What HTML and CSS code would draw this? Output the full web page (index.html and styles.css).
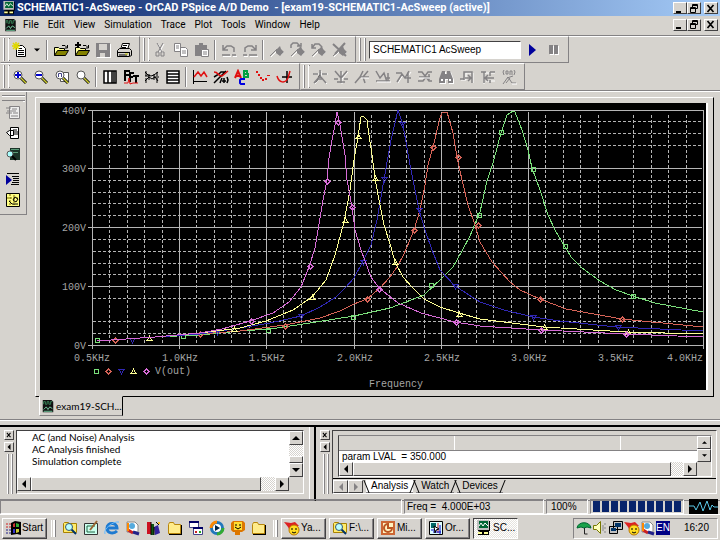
FILE: index.html
```html
<!DOCTYPE html>
<html lang="en">

<head>
  <meta charset="utf-8">
  <title>SCHEMATIC1-AcSweep - OrCAD PSpice A/D Demo</title>
  <link rel="stylesheet" href="styles.css">
</head>

<body>
  <!-- shared icons -->
  <svg class="defs" width="0" height="0">
    <symbol id="app" viewBox="0 0 16 16">
      <path fill="#000" d="M2 1h12v10H2zM4 11h9v4H2v-3z" />
      <path fill="#c0c0c0" d="M1 0h12v10H1z" />
      <path fill="#063" d="M3 1h9v7H3z" />
      <path fill="none" stroke="#fff" d="M3 6l2-3 2 3 2-3 3 3" />
      <path fill="#ff9" d="M2 12h4v2H2zM8 12h4v2H8z" />
    </symbol>
    <symbol id="doc-app" viewBox="0 0 16 16">
      <path fill="#111" d="M2 1h10l2 2v12H2z" />
      <path fill="none" stroke="#3a8a5c" d="M3 6V3h2v3h2V3h2v3h2V3h2" />
      <path fill="none" stroke="#7fe0b0" d="M3 12l3-3 2 3 2-3 3 2M3 14h10" />
    </symbol>
    <symbol id="folder" viewBox="0 0 16 16">
      <path fill="#000" d="M2 5h13v10H2z" />
      <path fill="#ffec8b" stroke="#b8860b" d="M1.500 13.500V4.500l1-2h4l1 2h6v9z" />
    </symbol>
    <symbol id="open" viewBox="0 0 16 16">
      <path fill="#ffff9c" stroke="#000" d="M1.500 13.500v-8h4l1 1h5v3" />
      <path fill="#848200" stroke="#000" d="M1.500 13.500l3-5h11l-3 5z" />
      <path fill="none" stroke="#000" d="M9 3.500h3l2 2M14.500 3v3H12" />
    </symbol>
    <symbol id="lens" viewBox="0 0 16 16">
      <path stroke="#000" stroke-width="3" d="M9 9l5 5" />
      <path stroke="#cc3" stroke-width="1.500" d="M9 9l5 5" />
      <circle cx="6" cy="6" r="4" fill="#fff" stroke="#555" />
    </symbol>
    <symbol id="search" viewBox="0 0 16 16">
      <path fill="#ffec6b" stroke="#a98200" d="M1.500 12.500v-9l1-1h4l1 1h7v9z" />
      <path stroke="#036" stroke-width="2" d="M9 9l5 5" />
      <circle cx="7" cy="7" r="3.500" fill="#bff" stroke="#357" />
    </symbol>
    <symbol id="flag" viewBox="0 0 16 16">
      <path fill="none" stroke="#fff" d="M2 15l7-7M12 13l3-3" />
      <path fill="none" stroke="#848284" d="M1 14l7-7" />
      <path fill="#848284" d="M7 8l4-4 1 3 3 3-4 4-4-3z" />
    </symbol>
    <symbol id="messenger" viewBox="0 0 16 16">
      <path fill="#d22" d="M0 2l7 1 4-1 4 4-6 1-3 4-2-4z" />
      <circle cx="10" cy="10" r="5" fill="#fd2" stroke="#b70" />
      <path stroke="#000" fill="none" d="M8 8v2M12 8v2M8 12l2 1 2-1" />
    </symbol>
    <symbol id="paint" viewBox="0 0 16 16">
      <path fill="#fff" stroke="#888" d="M2 2h8l3 3v7H2z" />
      <circle cx="7" cy="6" r="3" fill="#5ad" />
      <path stroke="#c22" stroke-width="3" d="M3 10l5 3" />
      <path stroke="#228" stroke-width="3" d="M8 12l6 2" />
      <path stroke="#f80" stroke-width="2" d="M3 3v8" />
    </symbol>
    <symbol id="cursor-curve" viewBox="0 0 16 16">
      <path fill="none" stroke="#fff" d="M2 14l5-8 3 4 5-7" />
      <path fill="none" stroke="#848284" stroke-width="1.500" d="M1 13l5-8 3 4 4-7M0 4h6M12 3v11M9 9h6" />
    </symbol>
    <symbol id="min" viewBox="0 0 10 9"><path d="M1 7h5v2H1z" /></symbol>
    <symbol id="restore" viewBox="0 0 10 9">
      <path fill="none" stroke="#000" d="M3.500 3V.5h5v4H7M1.500 8.500v-5h5v5zM1 4.500h6M3 1.500h6" />
    </symbol>
    <symbol id="close" viewBox="0 0 10 9">
      <path fill="none" stroke="#000" stroke-width="1.700" d="M1.500 1l6 7M7.500 1l-6 7" />
    </symbol>
    <symbol id="up" viewBox="0 0 8 8"><path d="M4 2l4 4H0z" /></symbol>
    <symbol id="down" viewBox="0 0 8 8"><path d="M0 2h8L4 6z" /></symbol>
    <symbol id="left" viewBox="0 0 8 8"><path d="M6 0v8L2 4z" /></symbol>
    <symbol id="right" viewBox="0 0 8 8"><path d="M2 0v8l4-4z" /></symbol>
    <!-- trace markers -->
    <path id="square" d="M1.500 1.500h4v4h-4z" />
    <path id="diamond" d="M3.500 1l2.500 2.500-2.500 2.500-2.500-2.500z" />
    <path id="tri-up" d="M3.500 1L6 5.500H1z" />
    <path id="tri-down" d="M3.500 6L6 1.500H1z" />
  </svg>

  <header class="titlebar">
    <svg class="icon"><use href="#app" /></svg>
    <h1>SCHEMATIC1-AcSweep - OrCAD PSpice A/D Demo &nbsp;- [exam19-SCHEMATIC1-AcSweep (active)]</h1>
    <div class="window-buttons">
      <button aria-label="Minimize"><svg><use href="#min" /></svg></button>
      <button aria-label="Restore"><svg><use href="#restore" /></svg></button>
      <button class="close" aria-label="Close"><svg><use href="#close" /></svg></button>
    </div>
  </header>

  <nav class="menubar">
    <svg class="icon"><use href="#doc-app" /></svg>
    <button>File</button>
    <button>Edit</button>
    <button>View</button>
    <button>Simulation</button>
    <button>Trace</button>
    <button>Plot</button>
    <button>Tools</button>
    <button>Window</button>
    <button>Help</button>
    <div class="window-buttons">
      <button aria-label="Minimize"><svg><use href="#min" /></svg></button>
      <button aria-label="Restore"><svg><use href="#restore" /></svg></button>
      <button class="close" aria-label="Close"><svg><use href="#close" /></svg></button>
    </div>
  </nav>

  <div class="toolbar">
    <div class="group">
      <i class="grip"></i>
      <button class="tool" aria-label="New"><svg class="icon" viewBox="0 0 16 16">
        <path fill="#fff" stroke="#000" d="M4.500 14.500v-11h6l3 3v8z" />
        <path stroke="#000" d="M7 6.500h3M6 8.500h6M6 10.500h6M6 12.500h6" />
        <path stroke="#e0d800" stroke-width="1.500" d="M4 0v8M0 4h8M1 1l6 6M7 1L1 7" />
      </svg></button>
      <button class="tool narrow" aria-label="New menu"><svg class="arrow"><use href="#down" /></svg></button>
      <i class="sep"></i>
      <button class="tool" aria-label="Open"><svg class="icon"><use href="#open" /></svg></button>
      <button class="tool" aria-label="Append"><svg class="icon" viewBox="0 0 16 16">
        <use href="#open" /><path stroke="#000" stroke-width="2" d="M4 0v6M1 3h6" />
      </svg></button>
      <button class="tool" aria-label="Save"><svg class="icon" viewBox="0 0 16 16">
        <path fill="#fff" d="M2 2h14v14H2z" />
        <path fill="#848284" d="M1 1h14v14H1z" /><path fill="#d6d3ce" d="M4 2h8v6H4zM5 11h5v4H5z" />
      </svg></button>
      <button class="tool" aria-label="Print"><svg class="icon" viewBox="0 0 16 16">
        <path fill="#fff" stroke="#000" d="M4.500 7.500l2-6h7l-2 6z" /><path stroke="#000" d="M7 3.500h4M6 5.500h4" />
        <path fill="#d6d3ce" stroke="#000" d="M1.500 8.500l2-2h10l2 2v5l-2 1h-12z" />
        <path stroke="#000" d="M1 10.500h13M3 13h8M13.500 10v4" /><path stroke="#cc0" d="M9 12h3" />
      </svg></button>
    </div>
    <div class="group">
      <i class="grip"></i>
      <button class="tool" aria-label="Cut"><svg class="icon" viewBox="0 0 16 16">
        <path fill="none" stroke="#fff" d="M6 2l5 9M12 2l-5 9" />
        <path fill="none" stroke="#848284" d="M5 1l5 9M11 1l-5 9M4 10h3v4H4zM9 10h3v4H9z" />
      </svg></button>
      <button class="tool" aria-label="Copy"><svg class="icon" viewBox="0 0 16 16">
        <path fill="#fff" stroke="#848284" d="M1.500 1.500h6v8h-6zM7.500 5.500h5l2 2v7h-7z" />
        <path stroke="#848284" d="M3 4h3M3 6h3M9 9h4M9 11h4" />
      </svg></button>
      <button class="tool" aria-label="Paste"><svg class="icon" viewBox="0 0 16 16">
        <path fill="#848284" d="M1 3h4V1h4v2h4v11H1z" /><path fill="#fff" stroke="#848284" d="M7.500 7.500h7v7h-7z" />
        <path stroke="#848284" d="M9 10h4M9 12h4" />
      </svg></button>
      <i class="sep"></i>
      <button class="tool" aria-label="Undo"><svg class="icon" viewBox="0 0 16 16">
        <path fill="none" stroke="#848284" stroke-width="1.500" d="M2 3v5h5M2 8l4-4h4l3 2v4M1 13h8M11 13h4" /><path stroke="#fff" d="M2 14.500h8M12 14.500h4" />
      </svg></button>
      <button class="tool" aria-label="Redo"><svg class="icon" viewBox="0 0 16 16">
        <path fill="none" stroke="#848284" stroke-width="1.500" d="M14 3v5H9M14 8l-4-4H6L3 6v4M7 13h8M1 13h4" /><path stroke="#fff" d="M8 14.500h8M2 14.500h4" />
      </svg></button>
      <i class="sep"></i>
      <button class="tool" aria-label="Toggle bookmark"><svg class="icon"><use href="#flag" /></svg></button>
      <button class="tool" aria-label="Next bookmark"><svg class="icon" viewBox="0 0 16 16">
        <use href="#flag" /><path fill="none" stroke="#848284" stroke-width="1.500" d="M1 6V3l2-2h4l3 3M7 4h4V1" />
      </svg></button>
      <button class="tool" aria-label="Previous bookmark"><svg class="icon" viewBox="0 0 16 16">
        <use href="#flag" /><path fill="none" stroke="#848284" stroke-width="1.500" d="M1 2v4h4M1 6l3-4h4l3 3" />
      </svg></button>
      <button class="tool" aria-label="Clear bookmarks"><svg class="icon" viewBox="0 0 16 16">
        <use href="#flag" /><path stroke="#848284" stroke-width="2" d="M1 2l13 12M13 1L3 12" />
      </svg></button>
    </div>
    <div class="group">
      <i class="grip"></i>
      <input class="profile" type="text" aria-label="Simulation profile" value="SCHEMATIC1 AcSweep">
      <button class="tool" aria-label="Run"><svg class="icon" viewBox="0 0 16 16"><path fill="#00009c" d="M5 2l7 6-7 6z" /></svg></button>
      <button class="tool" aria-label="Pause"><svg class="icon" viewBox="0 0 16 16">
        <path fill="#fff" d="M5 4h4v9H5zM10 4h4v9h-4z" /><path fill="#848284" d="M4 3h4v9H4zM9 3h4v9H9z" />
      </svg></button>
    </div>
  </div>

  <div class="toolbar">
    <div class="group">
      <i class="grip"></i>
      <button class="tool" aria-label="Zoom in"><svg class="icon" viewBox="0 0 16 16">
        <use href="#lens" /><path stroke="#00c" stroke-width="2" d="M6 3v6M3 6h6" />
      </svg></button>
      <button class="tool" aria-label="Zoom out"><svg class="icon" viewBox="0 0 16 16">
        <use href="#lens" /><path stroke="#00c" stroke-width="2" d="M3 6h6" />
      </svg></button>
      <button class="tool" aria-label="Zoom area"><svg class="icon" viewBox="0 0 16 16">
        <path fill="#fff" stroke="#555" d="M6.500 3.500h8v9h-8z" /><use href="#lens" /><path fill="none" stroke="#448" d="M4.500 8V4.500h3V8" />
      </svg></button>
      <button class="tool" aria-label="Zoom fit"><svg class="icon"><use href="#lens" /></svg></button>
      <i class="sep"></i>
      <button class="tool" aria-label="Log X axis"><svg class="icon" viewBox="0 0 16 16">
        <path fill="#fff" stroke="#000" stroke-width="1.500" d="M2 2h12v12H2zM6 2v12M10 2v12M12 2v12" />
      </svg></button>
      <button class="tool" aria-label="Fourier"><svg class="icon" viewBox="0 0 16 16">
        <path fill="none" stroke="#000" stroke-width="2" d="M2 12V2h5M2 6h4M7 13V4h4M7 8h3M10 7h6M13 7v7" />
        <path fill="none" stroke="#e01010" d="M1 14h4l1-5 1 6 3-1h5" />
      </svg></button>
      <button class="tool" aria-label="Performance analysis"><svg class="icon" viewBox="0 0 16 16">
        <path fill="none" stroke="#000" d="M1 3l3 3 3 1 3-1 4-3M1 12l4-4 3 2 3-2 3 4M2 2v5M2 9v5M13 3v4M13 9v5M5 5v6M10 5v6M1 7h4M10 8h5" />
      </svg></button>
      <button class="tool" aria-label="Log Y axis"><svg class="icon" viewBox="0 0 16 16">
        <path fill="#fff" stroke="#000" stroke-width="1.500" d="M2 2h12v12H2zM2 5h12M2 8h12M2 11h12" />
      </svg></button>
      <i class="sep"></i>
      <button class="tool" aria-label="Add trace"><svg class="icon" viewBox="0 0 16 16">
        <path fill="none" stroke="#000" d="M1.500 1v14M1 12.500h14" /><path fill="none" stroke="#e01010" stroke-width="1.500" d="M2 8l4-5 3 4 3-4 3 5" />
      </svg></button>
      <button class="tool" aria-label="Eval goal function"><svg class="icon" viewBox="0 0 16 16">
        <path fill="none" stroke="#000" stroke-width="1.500" d="M1 8l5-3 2-2h5M1 14L13 2M7 14l2-5M11 9v5M14 8l1 3-1 3M9 12h4" />
        <path fill="none" stroke="#e01010" stroke-width="1.500" d="M1 3c5 0 3 4 8 4l6-5" />
      </svg></button>
      <button class="tool" aria-label="Text label"><svg class="icon" viewBox="0 0 16 16">
        <path fill="none" stroke="#e01010" stroke-width="2" d="M1 9l3-7 3 7M2 7h4" />
        <path fill="none" stroke="#00a040" stroke-width="2" d="M10 1v7h4V5h-4 3V2h-3" />
        <path fill="none" stroke="#0000e0" stroke-width="2" d="M11 10H7L6 11v3l1 1h4" />
      </svg></button>
      <button class="tool" aria-label="Mark data points"><svg class="icon" viewBox="0 0 16 16">
        <path fill="#e01010" d="M1 2h2v2H1zM3 5h2v2H3zM5 8h2v2H5zM7 10h2v2H7zM10 9h2v2h-2zM12 6h3v1h-3z" />
      </svg></button>
      <button class="tool" aria-label="Toggle cursor"><svg class="icon" viewBox="0 0 16 16">
        <path fill="none" stroke="#000" stroke-width="1.500" d="M11 2v12M6 8h10" /><path fill="none" stroke="#e01010" stroke-width="1.500" d="M1 7c2 7 8 8 11 2l2-7" />
      </svg></button>
    </div>
    <div class="group">
      <i class="grip"></i>
      <button class="tool" aria-label="Cursor peak"><svg class="icon" viewBox="0 0 16 16">
        <path stroke="#fff" d="M2 5h14M9 2v6L3 15M9 8l6 7" /><path fill="none" stroke="#848284" stroke-width="1.500" d="M8 1v6l-6 7M8 7l6 7M1 5h5M10 5h5M5 10h6" />
      </svg></button>
      <button class="tool" aria-label="Cursor trough"><svg class="icon" viewBox="0 0 16 16">
        <path fill="none" stroke="#fff" d="M3 3l6 7 6-7M9 3v12" /><path fill="none" stroke="#848284" stroke-width="1.500" d="M2 2l6 7 6-7M8 2v12M1 10h4M11 10h4M4 13h8" />
      </svg></button>
      <button class="tool" aria-label="Cursor slope"><svg class="icon" viewBox="0 0 16 16">
        <path fill="none" stroke="#848284" stroke-width="1.500" d="M1 14l5-6 3-6M6 8h9M9 8l5-6M9 8l2 6" /><path stroke="#fff" d="M7 9h8" />
      </svg></button>
      <button class="tool" aria-label="Cursor min"><svg class="icon" viewBox="0 0 16 16">
        <path fill="none" stroke="#848284" stroke-width="1.500" d="M1 2l4 7 4-5 3 9M1 12h14M13 4v8M10 9h5" /><path stroke="#fff" d="M2 13h14" />
      </svg></button>
      <button class="tool" aria-label="Cursor max"><svg class="icon"><use href="#cursor-curve" /></svg></button>
      <button class="tool" aria-label="Cursor point"><svg class="icon" viewBox="0 0 16 16">
        <path fill="none" stroke="#848284" stroke-width="1.500" d="M1 3h4l3 4 3-4h4M1 12h5l3-4 3 4h3M2 8h11M12 5v6" /><path stroke="#fff" d="M2 9h11" />
      </svg></button>
      <button class="tool" aria-label="Cursor search"><svg class="icon" viewBox="0 0 16 16">
        <path fill="#fff" d="M5 3h3v3h2V3h3l3 8v4h-5v-4H8v4H2v-4z" /><path fill="#848284" d="M4 2h3v3h2V2h3l3 8v4h-5v-4H7v4H1v-4z" /><path fill="#fff" d="M3 10h2v2H3zM11 10h2v2h-2z" />
      </svg></button>
      <button class="tool" aria-label="Next transition"><svg class="icon" viewBox="0 0 16 16">
        <path fill="none" stroke="#fff" d="M2 11h5V4h7v10" /><path fill="none" stroke="#848284" stroke-width="1.500" d="M1 10h4M5 11V3h8v11M6 9h7M9 6l3 3-3 3" />
      </svg></button>
      <button class="tool" aria-label="Previous transition"><svg class="icon" viewBox="0 0 16 16">
        <path fill="none" stroke="#fff" d="M4 15V4h11M6 12h9" /><path fill="none" stroke="#848284" stroke-width="1.500" d="M4 14V3h2M1 3h3M10 3h5M4 9h10M8 6L5 9l3 3M10 3v4M10 11v3" />
      </svg></button>
      <button class="tool" aria-label="Mark label"><svg class="icon" viewBox="0 0 16 16">
        <path fill="none" stroke="#848284" d="M3 1L2 3l1 3M5 2h2v3H5zM9 6V2h2v4M13 1l1 2-1 3M2 15l5-7 4 6h4M6 9l6-2M5 14l4-5" /><path stroke="#fff" d="M11 15h5" />
      </svg></button>
    </div>
  </div>

  <main class="workspace">
    <aside class="side">
      <i class="side-grip"></i>
      <button class="tool" aria-label="Simulation results"><svg class="icon" viewBox="0 0 16 16">
        <path fill="#eee" stroke="#848284" d="M4.500 14.500v-12h10v12z" /><path stroke="#848284" d="M1 4h5M7 5h5M2 7h9M1 9h6M8 9h5M6 12h7" />
      </svg></button>
      <button class="tool" aria-label="Output file"><svg class="icon" viewBox="0 0 16 16">
        <path fill="#fff" stroke="#000" d="M5.500 13.500v-11h8v11zM1.500 7.500l3-2h4v5h-4z" /><path stroke="#000" d="M8 5h4M9 7h4M9 9h4" />
      </svg></button>
      <button class="tool" aria-label="Circuit file"><svg class="icon" viewBox="0 0 16 16">
        <path fill="#1b3328" d="M5 2h10v12H5z" /><path stroke="#5a9a78" d="M6 3.500h8M7 6.500h6" /><circle cx="5" cy="8" r="3" fill="#aff" stroke="#555" /><path stroke="#000" stroke-width="2" d="M7 10l4 4" />
      </svg></button>
      <button class="tool late" aria-label="Output window"><svg class="icon" viewBox="0 0 16 16">
        <path stroke="#000" d="M2 2.500h12M7 5.500h7M8 7.500h6M8 9.500h6M7 11.500h7M6 13.500h8" /><path fill="#00009c" d="M1 4l6 5-6 5z" />
      </svg></button>
      <button class="tool" aria-label="Status window"><svg class="icon" viewBox="0 0 16 16">
        <path fill="#ffff84" stroke="#000" d="M1.500 1.500h13v13h-13z" /><path fill="none" stroke="#760" stroke-dasharray="2 1" d="M2 6h12M5 2v12M9 3v10" /><path fill="none" stroke="#000" d="M4 9l3 3h6M8 8l2-3 3 2-2 3z" />
      </svg></button>
    </aside>

    <section class="document">
      <div class="frame">
        <svg class="plot" viewBox="40 103 666 287" role="img" aria-label="V(out) against frequency">
          <g class="grid">
            <path class="minor" d="M93 121.500H702M93 133.500H702M93 145.500H702M93 180.500H702M93 192.500H702M93 203.500H702M93 215.500H702M93 239.500H702M93 251.500H702M93 263.500H702M93 274.500H702M93 298.500H702M93 321.500H702M93 333.500H702" />
            <path class="minor" d="M109.500 115V345M127.500 115V345M144.500 115V345M162.500 115V345M196.500 115V345M214.500 115V345M231.500 115V345M249.500 115V345M283.500 115V345M301.500 115V345M371.500 115V345M389.500 115V345M406.500 115V345M424.500 115V345M458.500 115V345M476.500 115V345M493.500 115V345M511.500 115V345M545.500 115V345M563.500 115V345M580.500 115V345M598.500 115V345M633.500 115V345M651.500 115V345M668.500 115V345M686.500 115V345" />
            <path d="M88 110.500H703M88 168.500H702M88 227.500H702M88 286.500H702M88 345.500H703" />
            <path d="M92.500 110V349M179.500 112V349M266.500 112V349M354.500 112V349M441.500 112V349M528.500 112V349M703.500 110V349" />
          </g>
          <g class="axis">
            <text x="62" y="114">400V</text>
            <text x="62" y="172">300V</text>
            <text x="62" y="231">200V</text>
            <text x="62" y="290">100V</text>
            <text x="74" y="349">0V</text>
            <text x="74" y="361">0.5KHz</text>
            <text x="162" y="361">1.0KHz</text>
            <text x="249" y="361">1.5KHz</text>
            <text x="337" y="361">2.0KHz</text>
            <text x="424" y="361">2.5KHz</text>
            <text x="511" y="361">3.0KHz</text>
            <text x="598" y="361">3.5KHz</text>
            <text x="667" y="361">4.0KHz</text>
            <text x="155" y="374">V(out)</text>
            <text x="369" y="387">Frequency</text>
          </g>
          <g class="green">
            <polyline points="97,341 155,337 200,335 240,331 270,329 297,325 354,316 390,308 406,302 424,295 442,278 453,267 462,251 470,236 480,212 487,181 493,163 501,133 507,115 513,111 515,112 522,130 528,150 532,168 540,190 548,215 556,232 564,245 571,257 582,268 600,281 616,290 633,296 655,303 703,312" />
            <use href="#square" x="94" y="337" /><use href="#square" x="180" y="333" /><use href="#square" x="265" y="327" /><use href="#square" x="350" y="314" /><use href="#square" x="428" y="282" /><use href="#square" x="476" y="212" /><use href="#square" x="498" y="129" /><use href="#square" x="530" y="166" /><use href="#square" x="562" y="243" /><use href="#square" x="630" y="293" />
            <use href="#square" x="93" y="368" />
          </g>
          <g class="red">
            <polyline points="97,341 155,337 200,334 240,331 285,325 320,318 340,311 354,304 367,299 380,288 390,277 397,267 403,256 407,247 414,230 420,210 425,185 428,165 433,147 440,118 442,113 447,112 453,133 457,157 462,180 468,205 475,225 480,242 492,262 510,282 520,290 540,299 566,309 622,319 703,327" />
            <use href="#diamond" x="112" y="337" /><use href="#diamond" x="197" y="331" /><use href="#diamond" x="282" y="323" /><use href="#diamond" x="364" y="296" /><use href="#diamond" x="411" y="227" /><use href="#diamond" x="430" y="144" /><use href="#diamond" x="455" y="154" /><use href="#diamond" x="475" y="222" /><use href="#diamond" x="537" y="296" /><use href="#diamond" x="619" y="316" />
            <use href="#diamond" x="105" y="368" />
          </g>
          <g class="blue">
            <polyline points="97,341 155,337 200,334 240,328 270,323 301,316 320,307 336,297 345,288 354,278 363,261 371,245 377,220 383,185 391,140 398,110 403,125 410,165 415,190 419,210 425,230 432,250 440,270 455,286 480,302 504,310 533,317 560,321 616,327 703,331" />
            <use href="#tri-down" x="129" y="337" /><use href="#tri-down" x="214" y="329" /><use href="#tri-down" x="298" y="313" /><use href="#tri-down" x="360" y="259" /><use href="#tri-down" x="381" y="176" /><use href="#tri-down" x="399" y="121" /><use href="#tri-down" x="416" y="207" /><use href="#tri-down" x="452" y="283" /><use href="#tri-down" x="530" y="314" /><use href="#tri-down" x="615" y="324" />
            <use href="#tri-down" x="118" y="368" />
          </g>
          <g class="yellow">
            <polyline points="97,341 155,337 200,333 240,328 266,321 293,310 312,297 326,280 335,255 344,222 350,190 354,160 358,137 361,117 363,116 367,120 369,135 372,155 375,178 379,200 384,225 391,247 395,262 403,277 413,288 424,299 440,307 459,313 480,319 544,327 626,332 703,334" />
            <use href="#tri-up" x="146" y="335" /><use href="#tri-up" x="231" y="326" /><use href="#tri-up" x="309" y="294" /><use href="#tri-up" x="342" y="217" /><use href="#tri-up" x="355" y="133" /><use href="#tri-up" x="372" y="175" /><use href="#tri-up" x="392" y="259" /><use href="#tri-up" x="456" y="311" /><use href="#tri-up" x="541" y="324" /><use href="#tri-up" x="625" y="329" />
            <use href="#tri-up" x="130" y="368" />
          </g>
          <g class="magenta">
            <polyline points="97,341 155,337 200,333 222,329 250,321 273,313 289,302 301,287 309,267 315,248 319,224 323,200 327,180 329,158 332,140 335,125 337,112 340,125 345,155 347,180 352,207 355,230 361,250 371,277 379,288 398,303 421,313 455,322 480,326 541,330 626,334 703,337" />
            <use href="#diamond" x="248" y="318" /><use href="#diamond" x="307" y="263" /><use href="#diamond" x="324" y="178" /><use href="#diamond" x="335" y="119" /><use href="#diamond" x="349" y="204" /><use href="#diamond" x="376" y="286" /><use href="#diamond" x="453" y="319" /><use href="#diamond" x="538" y="327" /><use href="#diamond" x="623" y="331" />
            <use href="#diamond" x="143" y="368" />
          </g>
        </svg>
      </div>
      <button class="doc-tab"><svg class="icon"><use href="#doc-app" /></svg>exam19-SCH...</button>
    </section>
  </main>

  <section class="docks">
    <div class="dock output">
      <div class="handle">
        <button aria-label="Close output"><svg><use href="#close" /></svg></button>
        <button aria-label="Collapse output"><svg><use href="#left" /></svg></button>
        <i></i>
      </div>
      <div class="log">
        <div class="log-row">
          <div class="lines">
            <p>AC (and Noise) Analysis</p>
            <p>AC Analysis finished</p>
            <p>Simulation complete</p>
          </div>
          <div class="vscroll">
            <button aria-label="Scroll up"><svg><use href="#up" /></svg></button>
            <span class="track"></span>
            <span class="thumb"></span>
            <button aria-label="Scroll down"><svg><use href="#down" /></svg></button>
          </div>
        </div>
        <div class="hscroll">
          <button aria-label="Scroll left"><svg><use href="#left" /></svg></button>
          <span class="thumb"></span>
          <span class="track"></span>
          <button aria-label="Scroll right"><svg><use href="#right" /></svg></button>
        </div>
      </div>
    </div>

    <div class="dock watch">
      <div class="handle">
        <button aria-label="Close status"><svg><use href="#close" /></svg></button>
        <button aria-label="Collapse status"><svg><use href="#left" /></svg></button>
        <i></i>
      </div>
      <div class="status-box">
        <div class="status-inner">
          <div class="log-row">
            <div class="values">
              <div class="heads"><span></span><span></span><span></span></div>
              <p>param LVAL &nbsp;= 350.000</p>
            </div>
            <div class="vscroll">
              <button aria-label="Scroll up"><svg><use href="#up" /></svg></button>
              <button aria-label="Scroll down"><svg><use href="#down" /></svg></button>
            </div>
          </div>
          <div class="hscroll">
            <button aria-label="Scroll left"><svg><use href="#left" /></svg></button>
            <span class="thumb"></span>
            <span class="track"></span>
            <button aria-label="Scroll right"><svg><use href="#right" /></svg></button>
          </div>
        </div>
        <div class="tabs">
          <button class="nav" aria-label="Previous tab"><svg><use href="#left" /></svg></button>
          <button class="nav" aria-label="Next tab"><svg><use href="#right" /></svg></button>
          <button class="tab active">Analysis</button>
          <button class="tab">Watch</button>
          <button class="tab">Devices</button>
        </div>
      </div>
    </div>
  </section>

  <footer class="statusbar">
    <span class="pane message"></span>
    <span class="pane freq">Freq = &nbsp;4.000E+03</span>
    <span class="pane percent">100%</span>
    <span class="pane blocks"><i></i><i></i><i></i><i></i><i></i><i></i><i></i><i></i><i></i><i></i></span>
    <svg class="scope" viewBox="0 0 29 15"><path fill="#000" d="M0 0h29v15H0z" /><path fill="none" stroke="#5bc8e8" d="M0 7h5l2 4 4-8 3 9 4-10 3 9 2-5 2 2h4" /></svg>
  </footer>

  <div class="taskbar">
    <button class="start"><svg class="icon" viewBox="0 0 16 16">
      <path stroke="#c22" stroke-dasharray="2 1" d="M0 4h6M0 7h6" /><path stroke="#228" stroke-dasharray="2 1" d="M0 10h6M0 13h6" />
      <path fill="#000" d="M5 3l4-2 6 1v13l-4-1-6 1z" /><path fill="#c33" d="M7 4l2-1v4H7z" /><path fill="#3a3" d="M10 3l3 1v3h-3z" /><path fill="#33c" d="M7 9h2v4H7z" /><path fill="#cc3" d="M10 9h3v3l-3 1z" />
    </svg>Start</button>
    <i class="bar-grip"></i>
    <div class="launch">
      <button class="tool" aria-label="Search"><svg class="icon"><use href="#search" /></svg></button>
      <button class="tool" aria-label="Notes"><svg class="icon" viewBox="0 0 16 16">
        <path fill="#cfe" stroke="#333" d="M1.500 3.500h13v11h-13z" /><path stroke="#264" d="M4 6h8M4 12h8M4 6v6" /><path stroke="#963" stroke-width="2" d="M14 1L7 10" />
      </svg></button>
      <button class="tool" aria-label="Browser"><svg class="icon" viewBox="0 0 16 16">
        <path fill="none" stroke="#1e7ad0" stroke-width="3" d="M3 8h10c0-6-10-6-10 0s7 6 10 3" /><path fill="none" stroke="#6bf" d="M1 14C-1 9 9 1 15 2" />
      </svg></button>
      <button class="tool" aria-label="Paint"><svg class="icon"><use href="#paint" /></svg></button>
      <button class="tool" aria-label="Books"><svg class="icon" viewBox="0 0 16 16">
        <path fill="#c12" d="M1 2h4v12H1z" /><path fill="#151" d="M5 4h3v11H5z" /><path fill="#329" d="M8 7l4-2 2 8-5 2z" /><path fill="none" stroke="#000" d="M5 2v13M8 7v8M10 2l3 3" /><path fill="#fb2" d="M12 2h2v2h-2z" />
      </svg></button>
      <button class="tool" aria-label="Folder"><svg class="icon"><use href="#folder" /></svg></button>
      <button class="tool" aria-label="Windows"><svg class="icon" viewBox="0 0 16 16">
        <path fill="#fff" stroke="#448" d="M1.500 1.500h9v6h-9zM5.500 7.500h9v7h-9z" /><path stroke="#006" stroke-width="2" d="M1 2h10M5 8h10" /><path fill="#c22" d="M7 11h2v2H7z" /><path fill="#2a2" d="M11 11h2v2h-2z" />
      </svg></button>
      <button class="tool" aria-label="Media player"><svg class="icon" viewBox="0 0 16 16">
        <circle cx="8" cy="8" r="5.500" fill="#fff" stroke="#27b" stroke-width="3" /><path fill="none" stroke="#f80" stroke-width="3" d="M2 8a6 6 0 0 1 6-6" /><path fill="none" stroke="#3a3" stroke-width="3" d="M14 8a6 6 0 0 1-6 6" /><path fill="#024" d="M6 5l5 3-5 3z" />
      </svg></button>
      <button class="tool" aria-label="Chat"><svg class="icon" viewBox="0 0 16 16">
        <path fill="#d70" d="M3 1h10l2 2v7l-3 2h-2v3H5v-3H3l-2-2V3z" /><path fill="#fd3" d="M4 2h8v8H4z" /><path fill="none" stroke="#000" d="M6 4v2M10 4v2M5 7l3 2 3-2" />
      </svg></button>
      <button class="tool" aria-label="Folder"><svg class="icon"><use href="#folder" /></svg></button>
    </div>
    <i class="bar-grip"></i>
    <div class="tasks">
      <button><svg class="icon"><use href="#messenger" /></svg>Ya...</button>
      <button><svg class="icon"><use href="#search" /></svg>F:\...</button>
      <button><svg class="icon" viewBox="0 0 16 16">
        <path fill="#c63" d="M1 1h14v14H1z" /><path fill="#fff3c0" d="M3 3h10v10H3z" /><path fill="none" stroke="#b52" stroke-width="2" d="M8 4a4 4 0 1 0 4 4H8z" />
      </svg>Mi...</button>
      <button><svg class="icon" viewBox="0 0 16 16">
        <path fill="#dff" stroke="#000" d="M1.500 1.500h13v13h-13z" /><path fill="#066" d="M3 3h5v5H3z" /><path stroke="#c22" d="M10 3v10" /><path stroke="#00c" d="M12 5v9M3 10h6M5 12h8" /><path fill="#fff" stroke="#000" d="M6 6l5 3-3 1-1 3z" />
      </svg>Or...</button>
      <button class="pressed"><svg class="icon"><use href="#app" /></svg>SC...</button>
    </div>
    <div class="tray">
      <svg class="icon" viewBox="0 0 16 16"><path fill="#1aa24a" stroke="#063" d="M1 8c1-7 13-7 14 0l-4-1-3 1-3-1z" /><path fill="none" stroke="#222" d="M8.500 8v6h3" /></svg>
      <svg class="icon" viewBox="0 0 16 16"><path fill="#ffb" stroke="#770" d="M1.500 5.500h3l4-4v12l-4-4h-3z" /><path fill="none" stroke="#888" d="M11 5v6M13 3v2M13 7v2M13 11v2" /></svg>
      <svg class="icon" viewBox="0 0 16 16"><path fill="#c0c0c0" stroke="#000" d="M5.500 1.500h9v8h-9zM1.500 6.500h8v7h-8z" /><path fill="#036" d="M7 3h6v4H7zM3 8h5v3H3z" /></svg>
      <svg class="icon"><use href="#messenger" /></svg>
      <svg class="icon"><use href="#paint" /></svg>
      <span class="lang">EN</span>
      <time>16:20</time>
    </div>
  </div>
</body>

</html>
```
FILE: styles.css
```css
* {
  box-sizing: border-box;
}

body {
  margin: 0;
  min-height: 100vh;
  display: flex;
  flex-direction: column;
  background: #d6d3ce;
  color: #000;
  font: 10px/12px "Liberation Sans", Arial, sans-serif;
  overflow: hidden;
}

button {
  display: flex;
  align-items: center;
  justify-content: center;
  margin: 0;
  padding: 0;
  border: 0;
  background: #d6d3ce;
  color: inherit;
  font: inherit;
}

p {
  margin: 0;
}

svg {
  flex: none;
}

.defs {
  position: absolute;
}

.icon {
  width: 16px;
  height: 16px;
}

/* title and menu */

.titlebar {
  display: flex;
  align-items: center;
  height: 16px;
  padding-right: 2px;
  background: linear-gradient(to right, #08246b, #a5cbf7);
  color: #fff;
}

.titlebar h1 {
  margin: 0;
  flex: 1;
  font: bold 11px/14px Roboto, sans-serif;
  white-space: nowrap;
}

.titlebar .icon,
.menubar .icon {
  width: 15px;
  height: 14px;
  margin: 0 0 0 2px;
}

.menubar {
  display: flex;
  align-items: center;
  height: 20px;
  padding: 0 2px 2px 1px;
  border-bottom: 1px solid #848284;
  box-shadow: 0 1px #fff;
  font-family: Roboto, sans-serif;
}

.menubar > button {
  padding: 0 4px 0 5px;
}

.window-buttons {
  display: flex;
  margin-left: auto;
}

.window-buttons button {
  width: 14px;
  height: 12px;
  border: 1px solid;
  border-color: #fff #424142 #424142 #fff;
}

.window-buttons .close {
  margin-left: 3px;
}

.window-buttons svg {
  width: 10px;
  height: 9px;
}

/* toolbars */

.toolbar {
  display: flex;
  height: 27px;
}

.toolbar + .toolbar {
  height: 28px;
  border-bottom: 1px solid #848284;
}

.group {
  display: flex;
  align-items: center;
  padding: 0 5px 0 2px;
  border: 1px solid;
  border-color: #fff #848284 #848284 transparent;
}

.grip {
  width: 6px;
  height: 23px;
  border: 1px solid #fff;
  border-width: 0 1px;
  box-shadow: 1px 0 #848284, inset 1px 0 #848284;
}

.tool {
  width: 21px;
  height: 21px;
}

.narrow {
  width: 14px;
}

.arrow {
  width: 6px;
  height: 6px;
}

.sep {
  width: 2px;
  height: 20px;
  margin: 0 2px;
  border-left: 1px solid #848284;
  border-right: 1px solid #fff;
}

.profile {
  width: 152px;
  height: 18px;
  margin-left: 4px;
  padding: 0 3px;
  border: 1px solid;
  border-color: #424142 #fff #fff #424142;
  background: #fff;
  font: inherit;
}

/* workspace */

.workspace {
  flex: 1;
  display: grid;
  grid-template-columns: 27px 1fr;
  border-top: 1px solid #fff;
  border-bottom: 1px solid #848284;
}

.side {
  align-self: start;
  padding: 3px 0 4px 2px;
  border-right: 1px solid #848284;
  border-bottom: 1px solid #848284;
}

.side-grip {
  display: block;
  height: 6px;
  margin: 0 1px 0 0;
  border: 1px solid #848284;
  border-width: 1px 0;
  box-shadow: 0 1px #fff, inset 0 1px #fff;
}

.side .late {
  margin-top: 4px;
}

.document {
  padding: 5px 6px 0 8px;
}

.frame {
  padding: 5px 5px 6px 4px;
  border: 1px solid;
  border-color: #fff #000 #000 #fff;
}

.plot {
  display: block;
  width: 100%;
  height: auto;
  background: #000;
  border-right: 2px solid #fff;
  shape-rendering: crispEdges;
}

.grid {
  fill: none;
  stroke: #b5b5b5;
}

.grid .minor {
  stroke-dasharray: 3 2;
}

.axis {
  fill: #a5a5a5;
  font: 10px "Liberation Mono", monospace;
}

.green, .red, .blue, .yellow, .magenta {
  fill: none;
}

.green { stroke: #7be07b; }
.red { stroke: #d66357; }
.blue { stroke: #3128b5; }
.yellow { stroke: #ffff94; }
.magenta { stroke: #d66bd6; }

.doc-tab {
  position: relative;
  height: 20px;
  margin: -1px 0 0 4px;
  border: 1px solid;
  border-color: #d6d3ce #000 #848284 #fff;
  font-family: Lato, sans-serif;
}

.doc-tab .icon {
  height: 14px;
}

/* docked panes */

.docks {
  display: grid;
  grid-template-columns: 316px 1fr;
  height: 78px;
  padding-top: 4px;
  border-top: 1px solid #fff;
}

.dock {
  display: flex;
  gap: 2px;
  padding: 3px 10px 6px 4px;
  border-top: 2px solid #000;
  border-bottom: 1px solid #848284;
}

.output {
  border-right: 2px solid #000;
  box-shadow: inset -4px 0 #d6d3ce, inset -5px 0 #fff;
}

.watch {
  padding-right: 3px;
}

.handle {
  display: flex;
  flex-direction: column;
  align-items: center;
  gap: 2px;
  width: 10px;
}

.handle button,
.vscroll button,
.hscroll button,
.thumb {
  border: 1px solid;
  border-color: #fff #424142 #424142 #fff;
  background: #d6d3ce;
}

.handle button {
  width: 10px;
  height: 10px;
}

.handle svg {
  width: 6px;
  height: 6px;
}

.handle i {
  flex: 1;
  width: 5px;
  border: 1px solid #fff;
  border-width: 0 1px;
  box-shadow: 1px 0 #848284, inset 1px 0 #848284;
}

.log {
  flex: 1;
  border: 1px solid;
  border-color: #424142 #fff #fff #424142;
}

.log-row {
  display: flex;
  height: 46px;
}

.lines {
  flex: 1;
  padding-left: 15px;
  background: #fff;
  font-family: Lato, sans-serif;
}

.vscroll {
  display: flex;
  flex-direction: column;
  width: 14px;
}

.vscroll button {
  height: 14px;
}

.vscroll .thumb {
  height: 7px;
}

.vscroll svg,
.hscroll svg,
.nav svg {
  width: 8px;
  height: 8px;
}

.track {
  flex: 1;
  background: repeating-conic-gradient(#fff 0 25%, #d6d3ce 0 50%) 0 0 / 2px 2px;
}

.hscroll {
  display: flex;
  height: 14px;
  margin-right: 14px;
}

.hscroll button {
  width: 14px;
}

.hscroll .thumb {
  flex: 16;
}

.status-box {
  flex: 1;
  display: flex;
  flex-direction: column;
  border: 1px solid;
  border-color: #424142 #fff #fff #424142;
}

.status-inner {
  margin: 4px 4px 1px 5px;
  border: 1px solid;
  border-color: #848284 #fff #fff #424142;
}

.status-inner .log-row {
  height: 26px;
}

.values {
  flex: 1;
  height: 26px;
  background: #fff;
  overflow: hidden;
}

.values p {
  padding-left: 3px;
}

.heads {
  display: grid;
  grid-template-columns: 115px 166px 1fr;
  height: 15px;
  background: #d6d3ce;
  border-bottom: 1px solid #848284;
}

.heads span + span {
  border-left: 1px solid #fff;
}

.status-inner .vscroll button {
  height: 13px;
}

.status-inner .vscroll svg {
  width: 5px;
  height: 5px;
}

.status-inner .hscroll .thumb {
  flex: 26;
}

.tabs {
  display: flex;
  padding-top: 1px;
  border-top: 1px solid #000;
}

.nav {
  width: 15px;
  height: 13px;
  border: 1px solid;
  border-color: #fff #424142 #424142 #fff;
  fill: #848284;
}

.tab {
  position: relative;
  height: 13px;
  margin-left: 3px;
  padding: 0 5px;
  border-bottom: 1px solid #848284;
}

.tab::before,
.tab::after {
  content: "";
  position: absolute;
  top: 0;
  width: 1px;
  height: 13px;
  background: #000;
}

.tab::before {
  left: 0;
  transform: skewX(22deg);
}

.tab::after {
  right: 0;
  transform: skewX(-22deg);
}

.tab.active {
  background: #fff;
}

/* status bar */

.statusbar {
  display: flex;
  gap: 2px;
  height: 16px;
  padding: 1px 2px 0 0;
}

.pane {
  padding: 1px 2px 0;
  border: 1px solid;
  border-color: #848284 #fff #fff #848284;
}

.message {
  flex: 1;
}

.freq {
  width: 140px;
}

.percent {
  width: 42px;
  padding-left: 4px;
}

.blocks {
  display: flex;
  gap: 2px;
  width: 94px;
  margin-right: 3px;
}

.blocks i {
  width: 7px;
  height: 11px;
  background: #08246b;
}

.scope {
  width: 29px;
  height: 15px;
}

/* taskbar */

.taskbar {
  display: flex;
  align-items: center;
  height: 26px;
  padding: 2px 2px 1px;
  border-top: 1px solid #fff;
}

.start,
.tasks button {
  width: 45px;
  height: 21px;
  border: 1px solid;
  border-color: #fff #424142 #424142 #fff;
  box-shadow: inset -1px -1px #848284;
}

.bar-grip {
  width: 4px;
  height: 17px;
  margin: 0 4px;
  border-left: 1px solid #fff;
  border-right: 2px solid #fff;
  box-shadow: 1px 0 #848284;
}

.launch {
  display: flex;
}

.tasks {
  display: flex;
  gap: 3px;
}

.tasks button {
  justify-content: flex-start;
  gap: 1px;
  padding-left: 2px;
}

.tasks .pressed {
  border-color: #424142 #fff #fff #424142;
  background: repeating-conic-gradient(#fff 0 25%, #e6e3de 0 50%) 0 0 / 2px 2px;
  box-shadow: none;
}

.tray {
  display: flex;
  align-items: center;
  margin-left: auto;
  width: 145px;
  height: 21px;
  padding: 0 8px 0 2px;
  border: 1px solid;
  border-color: #848284 #fff #fff #848284;
}

.lang {
  width: 14px;
  line-height: 14px;
  background: #000084;
  color: #fff;
  text-align: center;
}

.tray time {
  margin-left: auto;
}
```
